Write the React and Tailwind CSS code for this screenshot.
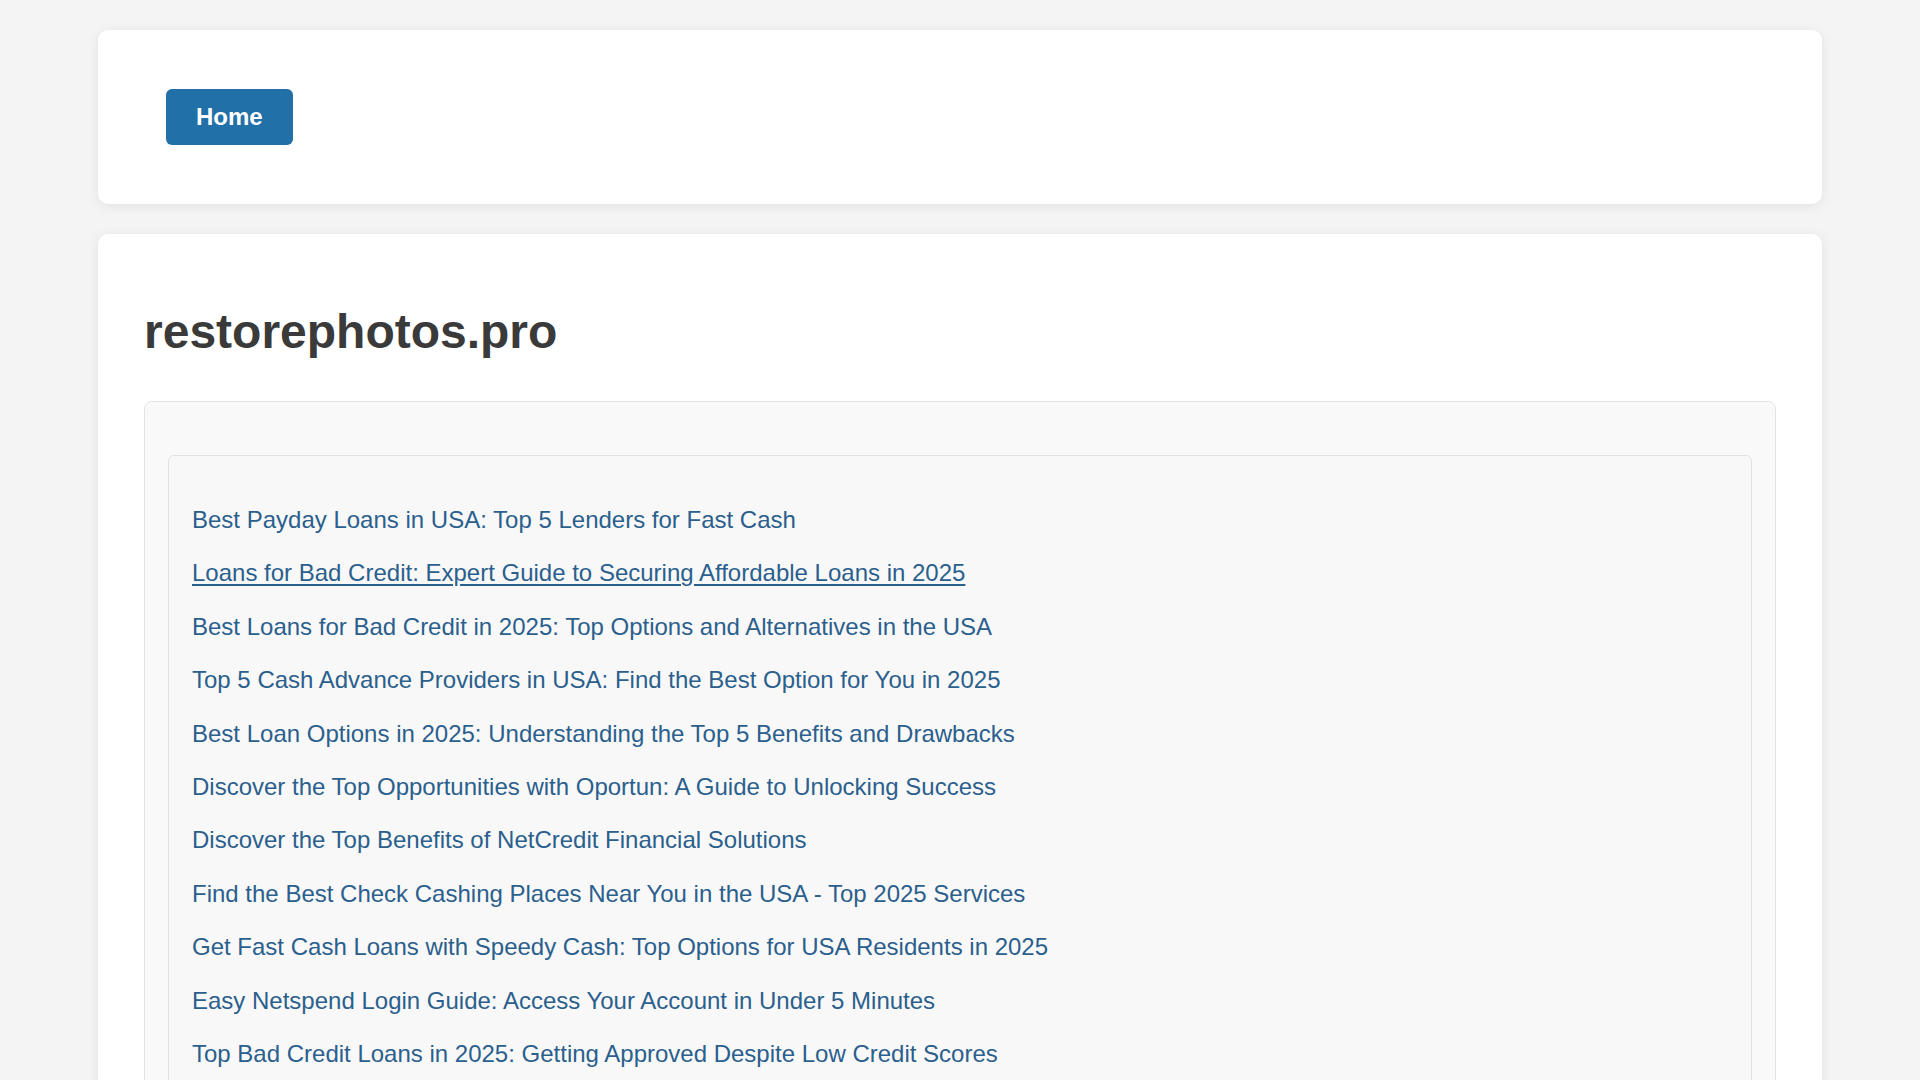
import React from "react";

const links = [
  "Best Payday Loans in USA: Top 5 Lenders for Fast Cash",
  "Loans for Bad Credit: Expert Guide to Securing Affordable Loans in 2025",
  "Best Loans for Bad Credit in 2025: Top Options and Alternatives in the USA",
  "Top 5 Cash Advance Providers in USA: Find the Best Option for You in 2025",
  "Best Loan Options in 2025: Understanding the Top 5 Benefits and Drawbacks",
  "Discover the Top Opportunities with Oportun: A Guide to Unlocking Success",
  "Discover the Top Benefits of NetCredit Financial Solutions",
  "Find the Best Check Cashing Places Near You in the USA - Top 2025 Services",
  "Get Fast Cash Loans with Speedy Cash: Top Options for USA Residents in 2025",
  "Easy Netspend Login Guide: Access Your Account in Under 5 Minutes",
  "Top Bad Credit Loans in 2025: Getting Approved Despite Low Credit Scores",
];

const App = () => {
  return (
    <div className="min-h-screen bg-[#f4f4f4] px-[98px] pt-[30px] pb-10 font-['Liberation_Sans',Arial,sans-serif]">
      <header className="bg-white rounded-[10px] shadow-[0_2px_12px_rgba(0,0,0,0.08)] px-[68px] py-[59px]">
        <nav>
          <a
            href="#"
            className="inline-flex items-center h-[56px] px-[30px] rounded-[6px] bg-[#2270a8] text-white text-[24px] font-bold"
          >
            Home
          </a>
        </nav>
      </header>

      <main className="mt-[30px] bg-white rounded-[10px] shadow-[0_2px_12px_rgba(0,0,0,0.08)] px-[46px] pt-[70px] pb-[40px]">
        <h1 className="text-[48px] leading-[56px] font-bold text-[#3a3a3a]">restorephotos.pro</h1>

        <section className="mt-[41px] border border-[#e4e4e4] rounded-[8px] bg-[#f9f9f9] px-[23px] pt-[53px] pb-[24px]">
          <div className="border border-[#e2e2e2] rounded-[6px] bg-[#f8f8f8] px-[23px] pt-[45px] pb-[30px]">
            <ul>
              {links.map((title, i) => (
                <li key={i} className="mb-[15px] last:mb-0">
                  <a
                    href="#"
                    className={
                      "text-[24px] leading-[38.4px] text-[#2b5f8d]" +
                      (i === 1 ? " underline underline-offset-[3px]" : "")
                    }
                  >
                    {title}
                  </a>
                </li>
              ))}
            </ul>
          </div>
        </section>
      </main>
    </div>
  );
};

export default App;
